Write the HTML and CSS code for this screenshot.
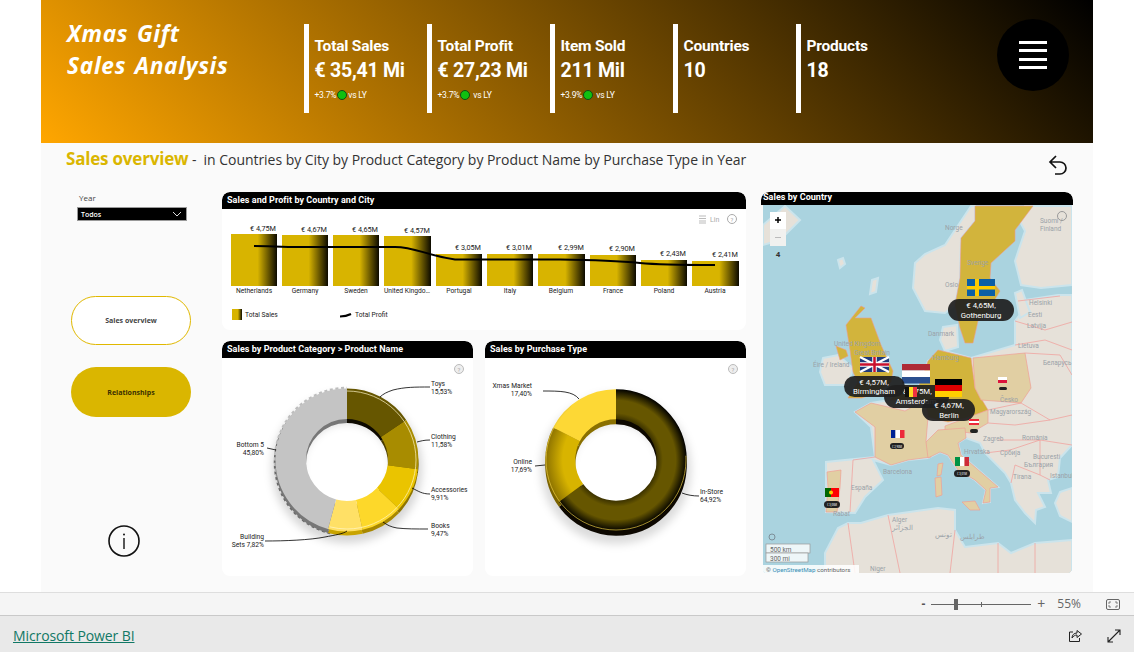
FILE: index.html
```html
<!DOCTYPE html>
<html lang="en">
<head>
<meta charset="utf-8">
<title>Xmas Gift Sales Analysis</title>
<link rel="stylesheet" href="styles.css">
</head>
<body>
<svg class="defs" width="0" height="0" aria-hidden="true">
  <defs>
    <linearGradient id="barGrad" x1="0" x2="1" y1="0" y2="0">
      <stop offset="0" stop-color="#d8b400"/><stop offset=".58" stop-color="#d8b400"/><stop offset="1" stop-color="#0c0a00"/>
    </linearGradient>
    <radialGradient id="storeGrad" gradientUnits="userSpaceOnUse" cx="616" cy="460" r="71">
      <stop offset=".58" stop-color="#3f3500"/><stop offset=".66" stop-color="#665600"/><stop offset=".84" stop-color="#665600"/><stop offset="1" stop-color="#000"/>
    </radialGradient>
    <radialGradient id="onlineGrad" gradientUnits="userSpaceOnUse" cx="616" cy="460" r="71">
      <stop offset=".75" stop-color="#d8b400"/><stop offset="1" stop-color="#8a7000"/>
    </radialGradient>
    <filter id="soft" x="-20%" y="-20%" width="140%" height="140%"><feGaussianBlur stdDeviation="4"/></filter>
    <clipPath id="leftSide"><polygon points="347,380 260,380 260,545 328,545 347,460"/></clipPath>
  </defs>
</svg>
<div class="stage">
  <main class="canvas">
    <header class="banner">
      <h1 class="title">Xmas Gift<br>Sales Analysis</h1>
      <section class="kpi"><h2>Total Sales</h2><p class="value">€ 35,41 Mi</p><p class="delta">+3.7%<i class="dot"></i>vs LY</p></section>
      <section class="kpi"><h2>Total Profit</h2><p class="value">€ 27,23 Mi</p><p class="delta">+3.7%<i class="dot"></i>&nbsp;vs LY</p></section>
      <section class="kpi"><h2>Item Sold</h2><p class="value">211 Mil</p><p class="delta">+3.9%<i class="dot"></i>&nbsp;vs LY</p></section>
      <section class="kpi"><h2>Countries</h2><p class="value">10</p></section>
      <section class="kpi"><h2>Products</h2><p class="value">18</p></section>
      <div class="menu"><span></span><span></span><span></span><span></span></div>
    </header>
    <div class="subhead">
      <p class="crumb"><strong>Sales overview</strong> -&nbsp; in Countries by City by Product Category by Product Name by Purchase Type in Year</p>
      <svg class="undo" width="20" height="22" viewBox="0 0 20 22"><path d="M8 2 2 8l6 6M2 8h10a6 6 0 0 1 0 12H7" fill="none" stroke="#111" stroke-width="1.700"/></svg>
    </div>
    <div class="content">
      <aside class="side">
        <label class="slicer-label">Year</label>
        <div class="slicer"><span>Todos</span><svg width="10" height="6" viewBox="0 0 10 6"><path d="m1 1 4 4 4-4" fill="none" stroke="#ddd"/></svg></div>
        <button class="pill outline">Sales overview</button>
        <button class="pill solid">Relationships</button>
        <svg class="info" width="32" height="32" viewBox="0 0 32 32"><circle cx="16" cy="16" r="15" fill="none" stroke="#111" stroke-width="1.600"/><path d="M16 13v11" stroke="#111" stroke-width="1.400"/><circle cx="16" cy="9.500" r="1" fill="#111"/></svg>
      </aside>
      <div class="charts">
        <section class="panel top">
          <h3 class="phead">Sales and Profit by Country and City</h3>
          <svg class="chart" viewBox="222 209 524 121">
            <g class="small muted"><path d="M699 216h7M699 218.500h7M699 221h7M699 223h7" stroke="#bbb"/><text x="710" y="222">Lin</text></g>
            <circle cx="732" cy="219" r="4.500" fill="none" stroke="#aaa"/><text class="tiny muted" x="730.500" y="221.500">?</text>
            <g fill="url(#barGrad)">
              <rect x="231" y="234" width="46" height="52"/><rect x="282" y="235" width="46" height="51"/><rect x="333" y="235" width="46" height="51"/><rect x="384" y="236" width="47" height="50"/><rect x="436" y="254" width="46" height="32"/><rect x="487" y="254" width="46" height="32"/><rect x="538" y="254" width="47" height="32"/><rect x="590" y="255" width="46" height="31"/><rect x="641" y="260" width="46" height="26"/><rect x="692" y="261" width="47" height="25"/>
            </g>
            <path d="M254 246C270 246 280 247 300 247H395C415 247 425 255 455 259.500H560C600 260 620 261 640 263 660 265 680 265 715 265" fill="none" stroke="#000" stroke-width="2"/>
            <g class="val" text-anchor="end">
              <text x="276" y="231">€ 4,75M</text><text x="327" y="232">€ 4,67M</text><text x="378" y="232">€ 4,65M</text><text x="430" y="233">€ 4,57M</text><text x="481" y="250">€ 3,05M</text><text x="532" y="250">€ 3,01M</text><text x="584" y="250">€ 2,99M</text><text x="635" y="251">€ 2,90M</text><text x="686" y="256">€ 2,43M</text><text x="738" y="257">€ 2,41M</text>
            </g>
            <g class="tick" text-anchor="middle">
              <text x="254" y="293">Netherlands</text><text x="305" y="293">Germany</text><text x="356" y="293">Sweden</text><text x="407" y="293">United Kingdo…</text><text x="459" y="293">Portugal</text><text x="510" y="293">Italy</text><text x="561" y="293">Belgium</text><text x="613" y="293">France</text><text x="664" y="293">Poland</text><text x="715" y="293">Austria</text>
            </g>
            <rect x="232" y="309" width="10" height="11" fill="url(#barGrad)"/>
            <text class="tick" x="245" y="317">Total Sales</text>
            <path d="M340 316.500c5 0 7-.5 11-2.500" fill="none" stroke="#000" stroke-width="2"/>
            <text class="tick" x="355" y="317">Total Profit</text>
          </svg>
        </section>
        <div class="donuts">
          <section class="panel cat">
            <h3 class="phead">Sales by Product Category &gt; Product Name</h3>
            <svg class="chart" viewBox="222 358 251 218">
              <circle cx="459" cy="369" r="4.500" fill="#eee" stroke="#bbb"/><text class="tiny muted" x="457.500" y="371.500">?</text>
              <circle cx="347" cy="468" r="60" fill="none" stroke="#000" stroke-opacity=".16" stroke-width="30" filter="url(#soft)"/>
              <circle clip-path="url(#leftSide)" cx="347" cy="463" r="71.500" fill="none" stroke="#6a6a6a" stroke-width="3.500" stroke-dasharray="3 2.600"/>
              <circle clip-path="url(#leftSide)" cx="347" cy="460" r="71.500" fill="none" stroke="#bdbdbd" stroke-width="3.500" stroke-dasharray="3 2.600"/>
              <g transform="translate(0 4) rotate(-90 347 460)" fill="none" stroke-width="30.500">
                <circle cx="347" cy="460" r="56.250" pathLength="100" stroke="#0e0a00" stroke-dasharray="15.530 100"/>
                <circle cx="347" cy="460" r="56.250" pathLength="100" stroke="#4a3d00" stroke-dasharray="11.580 100" stroke-dashoffset="-15.530"/>
                <circle cx="347" cy="460" r="56.250" pathLength="100" stroke="#8f7500" stroke-dasharray="9.910 100" stroke-dashoffset="-27.110"/>
                <circle cx="347" cy="460" r="56.250" pathLength="100" stroke="#a88800" stroke-dasharray="9.470 100" stroke-dashoffset="-37.020"/>
                <circle cx="347" cy="460" r="56.250" pathLength="100" stroke="#c9a400" stroke-dasharray="7.820 100" stroke-dashoffset="-46.490"/>
                <circle cx="347" cy="460" r="56.250" pathLength="100" stroke="#777" stroke-dasharray="45.690 100" stroke-dashoffset="-54.310"/>
              </g>
              <g transform="rotate(-90 347 460)" fill="none" stroke-width="30.500">
                <circle cx="347" cy="460" r="56.250" pathLength="100" stroke="#665600" stroke-dasharray="15.530 100"/>
                <circle cx="347" cy="460" r="56.250" pathLength="100" stroke="#a88c00" stroke-dasharray="11.580 100" stroke-dashoffset="-15.530"/>
                <circle cx="347" cy="460" r="56.250" pathLength="100" stroke="#eac400" stroke-dasharray="9.910 100" stroke-dashoffset="-27.110"/>
                <circle cx="347" cy="460" r="56.250" pathLength="100" stroke="#fdd82a" stroke-dasharray="9.470 100" stroke-dashoffset="-37.020"/>
                <circle cx="347" cy="460" r="56.250" pathLength="100" stroke="#ffe066" stroke-dasharray="7.820 100" stroke-dashoffset="-46.490"/>
                <circle cx="347" cy="460" r="56.250" pathLength="100" stroke="#c4c4c4" stroke-dasharray="45.690 100" stroke-dashoffset="-54.310"/>
                <circle cx="347" cy="460" r="69" pathLength="100" stroke="#fff6c8" stroke-width=".7" stroke-dasharray="54 100"/>
              </g>
              <g class="lead">
                <path d="M430 387c-15 0-25 0-37 3-6 2-10 4-13 7"/><path d="M430 440c-6 0-9 1-13 2"/><path d="M430 494c-8 0-12-3-18-6"/><path d="M428 529c-12 0-22 0-31-1-6-1-10-3-14-6"/><path d="M267 448l9 2"/><path d="M265 541c20 0 45-1 60-4 10-2 18-3 22-6"/>
              </g>
              <g class="tick">
                <text x="431" y="386">Toys</text><text x="431" y="394">15,53%</text><text x="431" y="439">Clothing</text><text x="431" y="447">11,58%</text><text x="431" y="492">Accessories</text><text x="431" y="500">9,91%</text><text x="431" y="528">Books</text><text x="431" y="536">9,47%</text>
                <text x="264" y="447" text-anchor="end">Bottom 5</text><text x="264" y="455" text-anchor="end">45,80%</text><text x="264" y="539" text-anchor="end">Building</text><text x="264" y="547" text-anchor="end">Sets 7,82%</text>
              </g>
            </svg>
          </section>
          <section class="panel type">
            <h3 class="phead">Sales by Purchase Type</h3>
            <svg class="chart" viewBox="485 358 261 218">
              <circle cx="733" cy="369" r="4.500" fill="#eee" stroke="#bbb"/><text class="tiny muted" x="731.500" y="371.500">?</text>
              <circle cx="616" cy="469" r="60" fill="none" stroke="#000" stroke-opacity=".14" stroke-width="30" filter="url(#soft)"/>
              <g transform="translate(0 5) rotate(-90 616 460)" fill="none" stroke-width="30">
                <circle cx="616" cy="460" r="55.750" pathLength="100" stroke="#0d0800" stroke-dasharray="64.920 100"/>
                <circle cx="616" cy="460" r="55.750" pathLength="100" stroke="#7a6200" stroke-dasharray="17.690 100" stroke-dashoffset="-64.920"/>
                <circle cx="616" cy="460" r="55.750" pathLength="100" stroke="#8a7000" stroke-dasharray="17.390 100" stroke-dashoffset="-82.610"/>
              </g>
              <g transform="rotate(-90 616 460)" fill="none" stroke-width="30">
                <circle cx="616" cy="460" r="55.750" pathLength="100" stroke="url(#storeGrad)" stroke-dasharray="64.920 100"/>
                <circle cx="616" cy="460" r="55.750" pathLength="100" stroke="url(#onlineGrad)" stroke-dasharray="17.690 100" stroke-dashoffset="-64.920"/>
                <circle cx="616" cy="460" r="55.750" pathLength="100" stroke="#fdd835" stroke-dasharray="17.390 100" stroke-dashoffset="-82.610"/>
                <circle cx="616" cy="460" r="70" pathLength="100" stroke="#e8c840" stroke-width=".7" stroke-dasharray="64.900 100" stroke-dashoffset="-24"/>
              </g>
              <g class="lead">
                <path d="M543 391c8 0 16 0 22 1 6 1 11 3 14 7"/><path d="M535 466l10-1"/><path d="M699 496c-6 0-12-1-17-3"/>
              </g>
              <g class="tick">
                <text x="532" y="388" text-anchor="end">Xmas Market</text><text x="532" y="396" text-anchor="end">17,40%</text><text x="532" y="464" text-anchor="end">Online</text><text x="532" y="472" text-anchor="end">17,69%</text><text x="700" y="494">In-Store</text><text x="700" y="502">64,92%</text>
              </g>
            </svg>
          </section>
        </div>
      </div>
      <section class="panel map">
        <h3 class="phead mapc">Sales by Country</h3>
        <svg class="mapsvg" viewBox="763 205 309 368" preserveAspectRatio="none">
          <rect x="763" y="205" width="309" height="368" fill="#aad3df"/>
          <g class="land">
            <polygon points="971,206 961,221 945,245 925,254 915,263 913,288 925,311 945,313 955,305 960,278 961,238 975,221 975,206"/>
            <polygon points="1025,206 1072,206 1072,285 1041,288 1021,285 1015,261 1025,231 1018,218"/>
            <polygon points="1072,295 1058,295 1018,301 1022,312 1015,321 1015,345 971,358 945,351 928,361 918,388 905,385 890,400 871,403 855,412 871,427 875,457 826,462 826,512 855,513 865,497 883,480 873,460 891,465 908,460 928,458 940,452 948,455 958,470 975,480 986,490 983,503 990,502 990,488 998,487 976,468 961,455 958,443 966,438 980,443 985,453 1005,473 1011,483 1015,500 1025,513 1035,523 1036,510 1045,507 1038,493 1051,493 1048,480 1058,477 1060,458 1072,445"/>
            <polygon points="1060,492 1072,488 1072,522 1060,516 1055,503"/>
            <polygon points="825,574 825,553 838,528 848,523 861,523 888,515 938,508 955,510 955,530 965,547 998,543 1011,553 1035,543 1072,540 1072,574"/>
            <polygon points="943,327 957,325 958,347 945,351 940,340"/>
            <polygon points="823,358 838,355 853,368 848,385 825,385 820,372"/>
            <polygon points="763,225 785,206 800,220 780,240 763,245"/>
            <polygon points="838,260 843,258 845,264 840,268"/>
            <polygon points="872,280 878,278 876,292 870,294"/>
            <polygon points="1015,293 1022,290 1030,312 1020,318"/>
          </g>
          <g class="gold">
            <polygon points="975,206 1033,206 1015,230 1015,241 991,263 990,278 1000,291 988,311 978,321 973,343 965,343 960,328 955,305 960,278 961,238 975,221"/>
            <polygon points="846,325 861,306 865,308 855,318 871,318 881,345 893,371 891,382 878,392 862,398 848,398 858,382 853,372 850,350"/>
            <polygon points="836,346 846,350 848,356 840,360"/>
            <polygon points="928,361 938,350 971,358 975,388 988,410 971,417 948,422 928,417 925,400 905,400 890,400 905,385 918,388"/>
          </g>
          <g class="tan">
            <polygon points="973,358 1025,353 1031,388 1021,403 981,400 975,388"/>
            <polygon points="871,403 905,411 925,400 928,417 926,441 931,457 908,460 891,465 875,457 875,427 855,412"/>
            <polygon points="945,426 988,410 988,423 971,433 945,430"/>
            <polygon points="926,442 938,430 965,428 966,438 958,443 961,455 976,468 998,487 990,488 990,502 983,503 986,490 975,480 958,470 948,455 940,452 928,458"/>
            <polygon points="827,472 841,470 840,487 837,512 826,512 828,487"/>
            <polygon points="935,478 941,477 942,495 936,497"/>
            <polygon points="938,464 943,463 941,475 937,476"/>
            <polygon points="962,502 975,501 980,510 970,510"/>
          </g>
          <g class="borders">
            <path d="M1015 321 1045 330 1072 322M1015 345 1045 340 1072 350M1025 353 1060 355 1072 375M1021 403 1050 420 1072 415M988 423 1015 425 1050 420M988 410 1021 403M998 440 1040 440 1072 445M985 453 1010 450 1040 440M1011 483 1015 465 1040 475M1040 440 1040 475 1050 480M875 457 853 460M853 460 850 512M848 523 855 573M888 515 900 573M955 530 950 573M998 543 998 573M1035 543 1035 573M1018 301 1060 296"/>
          </g>
          <g class="place">
            <text x="945" y="230">Norge</text><text x="1040" y="223">Suomi /</text><text x="1040" y="231">Finland</text><text x="967" y="265" class="gtxt">Sverige</text><text x="945" y="287">Oslo</text><text x="928" y="336">Danmark</text><text x="834" y="346">United Kingdom</text><text x="854" y="355">Great Britain</text><text x="813" y="367">Éire / Ireland</text><text x="1029" y="305">Helsinki</text><text x="1028" y="317">Eesti</text><text x="1027" y="328">Latvija</text><text x="1018" y="348">Lietuva</text><text x="1043" y="365">Беларусь</text><text x="932" y="360">Hamburg</text><text x="1000" y="402">Česko</text><text x="990" y="414">Magyarország</text><text x="983" y="441">Zagreb</text><text x="1022" y="440">România</text><text x="964" y="454">Hrvatska</text><text x="1000" y="455">Србија</text><text x="1033" y="459">Bucuresti</text><text x="1024" y="467">България</text><text x="883" y="474">Barcelona</text><text x="851" y="490">España</text><text x="1013" y="479">Tirana</text><text x="1050" y="478">Istanbul</text><text x="833" y="516">Rabat</text><text x="892" y="522">Alger</text><text x="892" y="530">الجزائر</text><text x="935" y="537">تونس</text><text x="960" y="539">طرابلس</text><text x="870" y="571">Niger</text>
          </g>
          <g class="flags">
            <g><rect x="967" y="279" width="28" height="17" fill="#0b5fa5"/><rect x="975" y="279" width="4" height="17" fill="#fecb00"/><rect x="967" y="286" width="28" height="3.500" fill="#fecb00"/></g>
            <rect x="948" y="299" width="66" height="22" rx="11" class="bubble"/>
            <text class="bub" x="981" y="308">€ 4,65M,</text><text class="bub" x="981" y="318">Gothenburg</text>
            <g><rect x="860" y="357" width="29" height="15" fill="#1f3a7a"/><path d="m860 357 29 15m0-15-29 15" stroke="#fff" stroke-width="2.500"/><path d="M874.500 357v15M860 364.500h29" stroke="#fff" stroke-width="4.500"/><path d="M874.500 357v15M860 364.500h29" stroke="#c8102e" stroke-width="2.500"/></g>
            <g><rect x="902" y="364" width="28" height="6.500" fill="#ae2a35"/><rect x="902" y="370.500" width="28" height="6.500" fill="#fff"/><rect x="902" y="377" width="28" height="6.500" fill="#2a4f8f"/></g>
            <rect x="884" y="385" width="65" height="23" rx="11.500" class="bubble"/>
            <text class="bub" x="917" y="394">€ 4,75M,</text><text class="bub" x="916" y="404">Amsterdam</text>
            <g><rect x="905" y="387" width="4" height="10" fill="#111"/><rect x="909" y="387" width="4" height="10" fill="#fdda24"/><rect x="913" y="387" width="4" height="10" fill="#ef3340"/></g>
            <rect x="844" y="376" width="61" height="21" rx="10.500" class="bubble"/>
            <text class="bub" x="874" y="385">€ 4,57M,</text><text class="bub" x="874" y="394">Birmingham</text>
            <g><rect x="935" y="379" width="27" height="6" fill="#000"/><rect x="935" y="385" width="27" height="6" fill="#d00"/><rect x="935" y="391" width="27" height="6" fill="#ffce00"/></g>
            <rect x="922" y="399" width="53" height="22" rx="11" class="bubble"/>
            <text class="bub" x="949" y="408">€ 4,67M,</text><text class="bub" x="949" y="418">Berlin</text>
            <g><rect x="998" y="377" width="9" height="3" fill="#fff"/><rect x="998" y="380" width="9" height="3" fill="#dc143c"/></g>
            <rect x="999" y="387" width="8" height="3" rx="1.500" fill="#222"/>
            <g><rect x="969" y="419" width="10" height="2" fill="#ed2939"/><rect x="969" y="421" width="10" height="2" fill="#fff"/><rect x="969" y="423" width="10" height="2" fill="#ed2939"/></g>
            <rect x="970" y="429" width="8" height="4" rx="2" fill="#222"/>
            <g><rect x="891" y="430" width="4.500" height="8" fill="#002395"/><rect x="895.500" y="430" width="4.500" height="8" fill="#fff"/><rect x="900" y="430" width="4.500" height="8" fill="#ed2939"/></g>
            <rect x="890" y="443" width="14" height="6" rx="3" fill="#222"/>
            <text class="mini" x="897" y="447.500">€ 2,90M</text>
            <g><rect x="955" y="457" width="5" height="9" fill="#009246"/><rect x="960" y="457" width="4.500" height="9" fill="#fff"/><rect x="964.500" y="457" width="4.500" height="9" fill="#ce2b37"/></g>
            <rect x="954" y="470" width="16" height="7" rx="3.500" fill="#222"/>
            <text class="mini" x="962" y="474.500">€ 3,01M</text>
            <g><rect x="825" y="488" width="6" height="9" fill="#060"/><rect x="831" y="488" width="8" height="9" fill="#f00"/><circle cx="831" cy="492.500" r="2" fill="#fc0"/></g>
            <rect x="824" y="501" width="16" height="7" rx="3.500" fill="#222"/>
            <text class="mini" x="832" y="505.500">€ 3,05M</text>
          </g>
          <g class="zoomctl">
            <rect x="770" y="212" width="16" height="17" fill="#fff"/><rect x="770" y="229" width="16" height="17" fill="#f1f1ef"/>
            <path d="M778 217v6M775 220h6" stroke="#000" stroke-width="1.500"/><path d="M775 237.500h6" stroke="#bbb"/>
            <text class="zl" x="778" y="257" text-anchor="middle">4</text>
          </g>
          <g class="scale">
            <circle cx="772" cy="537" r="3" fill="none" stroke="#7d8f99"/>
            <rect x="766" y="544" width="44" height="9" fill="#eef6f8" stroke="#999" stroke-width=".7"/>
            <rect x="766" y="553" width="42" height="9" fill="#eef6f8" stroke="#999" stroke-width=".7"/>
            <text x="770" y="551.500">500 km</text><text x="770" y="560.500">300 mi</text>
            <rect x="763" y="565" width="96" height="8" fill="#fff" fill-opacity=".85"/>
            <text class="attr" x="766" y="571.500">© <tspan fill="#3b8eb5">OpenStreetMap</tspan> contributors</text>
          </g>
          <circle cx="1062" cy="216" r="4.500" fill="none" stroke="#999"/>
        </svg>
      </section>
    </div>
  </main>
</div>
<div class="zoombar">
  <span class="minus">-</span>
  <span class="track"><i class="thumb"></i><i class="mark"></i></span>
  <span class="plus">+</span>
  <span class="pct">55%</span>
  <svg class="fit" width="14" height="11" viewBox="0 0 14 11"><rect x=".5" y=".5" width="13" height="10" rx="1.500" fill="none" stroke="#666"/><path d="M3 5V3h2M9 3h2v2M3 6v2h2M9 8h2V6" fill="none" stroke="#666" stroke-width=".8"/></svg>
</div>
<footer class="foot">
  <a class="brand" href="#">Microsoft Power BI</a>
  <svg class="share" width="14" height="14" viewBox="0 0 14 14"><path d="M5 3H1.500v9.500h10V9" fill="none" stroke="#222"/><path d="M4 9c0-3 2-5 5-5V1.500L13.500 5 9 8.500V6C7 6 5.500 7 4 9z" fill="none" stroke="#222"/></svg>
  <svg class="expand" width="14" height="14" viewBox="0 0 14 14"><path d="M1 13 13 1M8 1h5v5M1 8v5h5" fill="none" stroke="#222" stroke-width="1.100"/></svg>
</footer>
</body>
</html>
```
FILE: styles.css
```css
* { box-sizing: border-box; }
html, body { margin: 0; height: 652px; overflow: hidden; background: #fff; }
body { display: flex; flex-direction: column; font-family: "Open Sans", "Liberation Sans", sans-serif; }
.defs { position: absolute; }
.stage { height: 592px; padding: 0 41px; flex: none; }
.canvas { height: 592px; background: #fafafa; display: flex; flex-direction: column; }

.banner { height: 143px; flex: none; display: flex; background: linear-gradient(45deg, #ffa600 0%, #000 100%); color: #fff; padding-top: 24px; }
.title { margin: -6px 0 0; width: 263px; padding-left: 26px; font: italic 700 22.700px/32px "Open Sans", sans-serif; letter-spacing: .7px; word-spacing: 2px; }
.kpi { width: 123px; height: 89px; border-left: 5px solid #fff; padding: 9.500px 0 0 5.500px; font-family: Roboto, sans-serif; }
.kpi h2 { margin: 0; font: 700 15.500px/24px Roboto, sans-serif; letter-spacing: -.2px; }
.kpi .value { margin: 0; font: 700 19.500px/25px Roboto, sans-serif; letter-spacing: -.25px; }
.kpi .delta { margin: 5px 0 0; display: flex; align-items: center; font: 400 8.500px/14px Roboto, sans-serif; letter-spacing: -.2px; }
.dot { width: 10px; height: 10px; border-radius: 50%; background: #10c010; border: 1px solid #134a13; margin: 0 1px; }
.menu { margin: -5px 24px 0 auto; width: 72px; height: 72px; border-radius: 50%; background: #000; display: flex; flex-direction: column; justify-content: center; align-items: center; gap: 5.500px; }
.menu span { width: 28px; height: 3px; background: #fff; }

.subhead { height: 49px; flex: none; display: flex; justify-content: space-between; padding: 3px 25px 0 25px; }
.crumb { margin: 0; font: 400 14px/26px "Open Sans", sans-serif; color: #333; letter-spacing: -.04px; }
.crumb strong { font-size: 17px; color: #dab600; font-weight: 700; letter-spacing: -.2px; }
.undo { margin-top: 8px; }

.content { display: flex; height: 400px; }
.side { width: 181px; flex: none; display: flex; flex-direction: column; align-items: flex-start; padding-left: 30px; }
.slicer-label { margin: 0 0 0 8px; font: 400 8px/11px "Open Sans", sans-serif; color: #444; }
.slicer { margin: 4px 0 0 6px; width: 110px; height: 14px; background: #000; border: 1px solid #999; color: #fff; display: flex; align-items: center; justify-content: space-between; padding: 0 4px 0 3px; font: 600 7px/1 "Open Sans", sans-serif; }
.pill { width: 120px; border-radius: 25px; font: 700 7px/1 "Open Sans", sans-serif; padding: 0; }
.outline { height: 49px; margin-top: 75px; background: #fff; border: 1px solid #e0b800; color: #444; }
.solid { height: 50px; margin-top: 22px; background: #dab600; border: 0; color: #3a3000; }
.info { margin: 108px 0 0 37px; }

.charts { width: 524px; flex: none; display: flex; flex-direction: column; gap: 11px; }
.donuts { display: flex; gap: 12px; }
.panel { background: #fff; border-radius: 8px; display: flex; flex-direction: column; overflow: hidden; }
.panel.top { height: 138px; }
.panel.cat { width: 251px; height: 235px; }
.panel.type { width: 261px; height: 235px; }
.panel.map { width: 312px; height: 382px; margin-left: 15px; background: transparent; }
.phead { margin: 0; height: 17px; flex: none; background: #000; color: #fff; border-radius: 8px 8px 0 0; padding-left: 5px; font: 700 9px/16px Roboto, sans-serif; letter-spacing: .05px; }
.mapc { height: 13px; padding-left: 2px; line-height: 11px; }
.chart { display: block; width: 100%; flex: 1; min-height: 0; }
.mapsvg { display: block; width: 309px; height: 368px; margin-left: 2px; }

.val { font: 400 7.300px Roboto, sans-serif; fill: #222; }
.tick { font: 400 6.700px Roboto, sans-serif; fill: #222; }
.tiny { font: 400 6px Roboto, sans-serif; }
.small { font: 400 7px Roboto, sans-serif; }
.muted { fill: #aaa; }
.lead path { fill: none; stroke: #000; stroke-width: .8; }

.land polygon { fill: #e6e1d9; stroke: #cbe4ec; stroke-width: 2; }
.gold polygon { fill: #d2b43c; stroke: #ee9a8f; stroke-width: .6; }
.tan polygon { fill: #e1cfa3; stroke: #ef9f95; stroke-width: .7; }
.borders path { fill: none; stroke: #f0a3a0; stroke-width: .8; }
.place text { font: 400 6.500px Roboto, sans-serif; fill: #9aa2a8; }
.bubble { fill: #1f1f1f; fill-opacity: .93; }
.bub { font: 400 7.800px Roboto, sans-serif; fill: #fff; text-anchor: middle; }
.mini { font: 400 2.800px Roboto, sans-serif; fill: #fff; text-anchor: middle; }
.zl { font: 700 8px Roboto, sans-serif; fill: #333; }
.scale text { font: 400 6.500px Roboto, sans-serif; fill: #666; }
.scale .attr { font-size: 6.200px; }

.zoombar { height: 23px; flex: none; background: #f5f5f5; border-top: 1px solid #dedede; display: flex; align-items: center; justify-content: flex-end; padding-right: 14px; color: #666; font: 400 12px/1 "Open Sans", sans-serif; }
.track { position: relative; width: 100px; height: 1px; background: #666; margin: 0 6px; }
.thumb { position: absolute; left: 23px; top: -5px; width: 4px; height: 11px; background: #666; }
.mark { position: absolute; left: 50px; top: -2px; width: 1px; height: 5px; background: #666; }
.minus { color: #555; font-weight: 700; }
.plus { font-size: 14px; }
.pct { margin: 0 25px 0 12px; }
.foot { flex: 1; background: #e9e9e9; border-top: 1px solid #c9c9c9; display: flex; align-items: center; padding: 3px 13px 0; }
.brand { color: #117865; font: 400 14px/1 "Open Sans", sans-serif; letter-spacing: -.1px; }
.share { margin-left: auto; }
.expand { margin-left: 25px; }
```
